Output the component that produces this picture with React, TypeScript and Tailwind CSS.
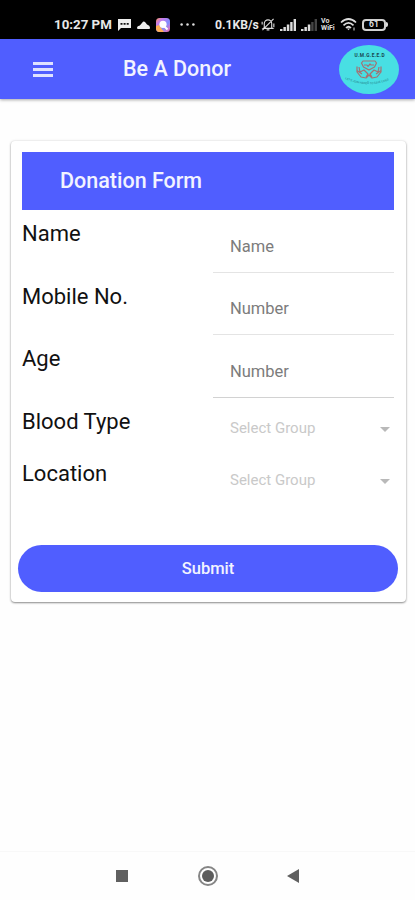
import React from "react";

function StatusBar() {
  return (
    <div className="flex h-[39px] items-center bg-black pl-[54px] pt-[10px] text-white">
      <span className="w-[58px] whitespace-nowrap text-[13.300px] font-bold leading-[14px] text-[#e8e8e8]">10:27 PM</span>
      <svg className="ml-[6px] mt-px h-3 w-[13px]" viewBox="0 0 13 12" fill="#eee">
        <path d="M0 0h13v9H3l-3 3z" />
        <path d="M2.500 4h2v1.700h-2zM5.600 4h2v1.700h-2zM8.700 4h2v1.700h-2z" fill="#111" />
      </svg>
      <svg className="ml-[6px] h-[8px] w-[13px]" viewBox="0 0 13 8" fill="#eee">
        <path d="M1.300 8C-.4 8-.3 5.300 1.500 5Q3 4.800 3.700 3.500L6 .8Q7 0 8 1L10 3.600Q13 4.500 13 6.500T11.500 8z" />
      </svg>
      <svg className="ml-[6px] h-[14px] w-[14px]" viewBox="0 0 14 14">
        <defs>
          <linearGradient id="gallery" x1="0" y1="0" x2="1" y2="1">
            <stop offset="0" stopColor="#ff9a5a" />
            <stop offset=".25" stopColor="#c77bea" />
            <stop offset=".6" stopColor="#7f8dff" />
            <stop offset="1" stopColor="#ff6aa8" />
          </linearGradient>
        </defs>
        <rect width="14" height="14" rx="3.500" fill="url(#gallery)" />
        <path d="M0 8l3-1 5 7H3.500Q0 14 0 10z" fill="#ffae55" />
        <circle cx="7" cy="6.300" r="3.600" fill="#fff" />
        <path d="M8 8l3.500 3.500" stroke="#fff" strokeWidth="2" />
      </svg>
      <svg className="ml-[10px] h-[3px] w-[15px]" viewBox="0 0 15 3" fill="#ddd">
        <circle cx="1.600" cy="1.500" r="1.250" /><circle cx="7.500" cy="1.500" r="1.250" /><circle cx="13.400" cy="1.500" r="1.250" />
      </svg>
      <span className="ml-[20px] w-[44px] whitespace-nowrap text-[12.200px] font-bold leading-[14px] text-[#e8e8e8]">0.1KB/s</span>
      <svg className="ml-[2px] h-[13px] w-[14px]" viewBox="0 0 14 14" fill="none" stroke="#ddd" strokeWidth="1.200">
        <path d="M3 10.500V6a4 4 0 0 1 8 0v4.500l1 .7H2zM5.500 12.800h3M13 1L1 13M.7 4v3M13.300 6v4" />
      </svg>
      <svg className="ml-[5px] h-[12px] w-[16px]" viewBox="0 0 16 12" fill="#ddd">
        <path d="M0 10h2.500v2H0zM3.400 8h2.500v4H3.400zM6.800 5.500h2.500V12H6.800zM10.200 3h2.400v9h-2.400zM13.600 0H16v12h-2.400z" />
      </svg>
      <svg className="ml-[5px] h-[12px] w-[16px]" viewBox="0 0 16 12" fill="#ddd">
        <path d="M0 10h2.500v2H0zM3.400 8h2.500v4H3.400zM6.800 5.500h2.500V12H6.800z" />
        <path d="M10.200 3h2.400v9h-2.400zM13.600 0H16v12h-2.400z" fill="#444" />
      </svg>
      <span className="ml-[4px] w-[16px] text-[7px] font-bold leading-[6.500px] text-[#e0e0e0]">
        <span className="block">Vo</span>
        <span className="block">WiFi</span>
      </span>
      <svg className="ml-[3px] h-[13px] w-[17px]" viewBox="0 0 17 13" fill="none" stroke="#ddd" strokeWidth="1.700">
        <path d="M1 4.500Q8.500-2.500 16 4.500M3.500 7.300Q8.500 2.500 13.500 7.300M6 10Q8.500 7.500 11 10" />
        <path d="M7 10.500l1.500 1.800 1.500-1.800z" fill="#ddd" stroke="none" />
        <path d="M14 9.500v3" strokeWidth="1" />
      </svg>
      <div className="ml-[5px] flex items-center">
        <span className="flex h-[12px] w-[24px] items-center justify-center rounded-[4px] border-2 border-[#d0d0d0] text-[8.500px] font-bold leading-none text-[#ddd]">61</span>
        <span className="h-[5px] w-[2px] rounded-r bg-[#ddd]" />
      </div>
    </div>
  );
}

function Logo() {
  return (
    <svg className="h-[49px] w-[60px]" viewBox="0 0 60 49">
      <defs>
        <path id="motto" d="M6 34Q30 45 55 33" />
      </defs>
      <ellipse cx="30" cy="24.500" rx="30" ry="24.500" fill="#48dfe3" />
      <text x="30.500" y="11.700" textAnchor="middle" textLength="30" fontSize="4.800" fontWeight="700" fill="#17454e">U.M.G.E.E.D</text>
      <g fill="none" stroke="#a57072" strokeWidth="1.200" strokeLinejoin="round">
        <path d="M24 16h12l1.500 2-2 4-5.500 3-5.500-3-2-4zM25 20h3l1 1.300 2-2.300 1 1h3" />
        <path d="M18 21.500v5.500l4 5 5 1 3-3 3 3 5-1 4-5v-5.500M20 22l1 5 4-2 4 4-2 3M40 22l-1 5-4-2-4 4 2 3M18 25.500l5 3.500M42 25.500l-5 3.500" />
      </g>
      <text fontSize="2.900" fill="#257984"><textPath href="#motto" startOffset="0">LET'S JOIN HANDS TO SAVE LIVES</textPath></text>
    </svg>
  );
}

function AppBar() {
  return (
    <header className="flex h-[60px] items-center bg-[#505eff] pl-[33px] pr-4 shadow-[0_1px_3px_rgba(0,0,0,0.35)]">
      <div className="flex w-[20px] flex-col gap-[3px]">
        <span className="h-[3px] bg-[#dfe2ff]" />
        <span className="h-[3px] bg-[#dfe2ff]" />
        <span className="h-[3px] bg-[#dfe2ff]" />
      </div>
      <h1 className="ml-[70px] flex-1 whitespace-nowrap text-[21.500px] font-medium leading-6 text-[#f2f3ff]">Be A Donor</h1>
      <Logo />
    </header>
  );
}

function InputRow({ label, hint, line }: { label: string; hint: string; line: string }) {
  return (
    <div className="flex h-[62.500px] justify-between">
      <label className="mt-[11px] text-[22px] leading-[26px] text-[#111]">{label}</label>
      <div className={"h-[62.500px] w-[181px] border-b pl-[17px] pt-[26.500px] text-[16.500px] leading-5 text-[#7c7c7c] " + line}>{hint}</div>
    </div>
  );
}

function SelectRow({ label }: { label: string }) {
  return (
    <div className="flex h-[52px] justify-between">
      <label className="mt-[11px] text-[22px] leading-[26px] text-[#111]">{label}</label>
      <div className="mt-[21px] flex h-5 w-[181px] items-center justify-between pl-[17px] pr-[4px] text-[15px] text-[#c9c9c9]">
        <span>Select Group</span>
        <svg className="mt-px h-[5px] w-[10px]" viewBox="0 0 10 5" fill="#b9b9b9"><path d="M0 0h10L5 5z" /></svg>
      </div>
    </div>
  );
}

export default function App() {
  return (
    <div className="flex h-[900px] w-[415px] flex-col overflow-hidden bg-[#fefefe] font-['Roboto',sans-serif]">
      <StatusBar />
      <AppBar />
      <main className="flex-1 pl-[11px] pr-[9px] pt-[42px]">
        <section className="h-[461px] rounded-[4px] bg-white px-[7px] pt-[11px] shadow-[0_1px_2px_rgba(0,0,0,0.42),0_0_3px_rgba(0,0,0,0.12)]">
          <div className="pl-[4px] pr-[5px]">
            <h2 className="flex h-[58px] items-center bg-[#505eff] pl-[38px] pt-px text-[21.500px] font-medium text-[#f2f3ff]">Donation Form</h2>
            <InputRow label="Name" hint="Name" line="border-[#e4e4e4]" />
            <InputRow label="Mobile No." hint="Number" line="border-[#e4e4e4]" />
            <InputRow label="Age" hint="Number" line="border-[#d2d2d2]" />
            <SelectRow label="Blood Type" />
            <SelectRow label="Location" />
          </div>
          <button className="mt-[43.500px] block h-[47px] w-[380px] rounded-full bg-[#505eff] pt-px text-[16.500px] font-medium text-[#f2f3ff]">Submit</button>
        </section>
      </main>
      <nav className="flex h-[49px] items-center border-t border-[#f8f8f8] pl-[116px]">
        <span className="h-[12px] w-[12px] bg-[#606060]" />
        <span className="ml-[70px] flex h-[20px] w-[20px] items-center justify-center rounded-full border-2 border-[#858585]">
          <span className="h-[12px] w-[12px] rounded-full bg-[#5c5c5c]" />
        </span>
        <svg className="ml-[69px] h-[14px] w-[12px]" viewBox="0 0 12 14" fill="#606060"><path d="M12 0v14L0 7z" /></svg>
      </nav>
    </div>
  );
}
